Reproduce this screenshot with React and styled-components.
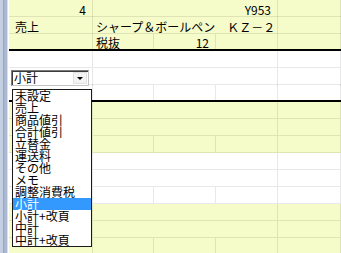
import React from "react";
import styled, { createGlobalStyle } from "styled-components";

const GlobalStyle = createGlobalStyle`
  html, body {
    margin: 0;
    padding: 0;
    background: #ffffff;
    overflow: hidden;
  }
  body {
    font-family: "Noto Sans CJK JP", "Liberation Sans", sans-serif;
    font-size: 12px;
    color: #000000;
  }
`;

const Frame = styled.div`
  display: flex;
  width: 341px;
  height: 253px;
  overflow: hidden;
`;

const WindowEdge = styled.div`
  flex: 0 0 9px;
  background: linear-gradient(
    to right,
    #c4d0e2 0 3px,
    #95a6c2 3px 4px,
    #a9b8d0 4px 7px,
    #dbe1ea 7px 8px,
    #ffffff 8px 9px
  );
`;

const Sheet = styled.div`
  flex: 1;
  min-width: 0;
`;

const Band = styled.div`
  background: ${(props) => (props.$tint ? "#f6fbca" : "#ffffff")};
`;

const Row = styled.div`
  display: grid;
  grid-template-columns: ${(props) =>
    props.$split ? "84px 61px 62px 62px 63px" : "84px 185px 63px"};
  height: 17px;
  box-sizing: border-box;
  border-bottom: ${(props) =>
    props.$thick ? "2px solid #000000" : "1px solid rgba(0, 0, 0, 0.09)"};
`;

const Cell = styled.div`
  box-sizing: border-box;
  height: 100%;
  border-right: 1px solid rgba(0, 0, 0, 0.09);
  padding-left: ${(props) => (props.$first ? "6px" : "3px")};
  padding-right: ${(props) => (props.$right ? "6px" : "0")};
  padding-top: ${(props) => (props.$thick ? "2px" : "3px")};
  text-align: ${(props) => (props.$right ? "right" : "left")};
  line-height: 14px;
  white-space: nowrap;
`;

const ComboCell = styled.div`
  box-sizing: border-box;
  border-right: 1px solid rgba(0, 0, 0, 0.09);
  padding: 2px 0 0 2px;
  position: relative;
  z-index: 2;
`;

const Combo = styled.div`
  position: relative;
  display: flex;
  align-items: center;
  width: 78px;
  height: 16px;
  box-sizing: border-box;
  background: #ffffff;
  border: 1px solid;
  border-color: #7c7c7c #c4c4c4 #c4c4c4 #7c7c7c;
  box-shadow: inset 1px 1px 0 #3c3c3c;
`;

const ComboText = styled.span`
  flex: 1;
  padding-left: 2px;
  line-height: 14px;
`;

const ArrowButton = styled.span`
  display: flex;
  align-items: center;
  justify-content: center;
  width: 14px;
  height: 12px;
  margin-right: 1px;
  background: #f3f3f3;
  border: 1px solid #e2e2e2;
  box-sizing: border-box;

  &::after {
    content: "";
    border-left: 3px solid transparent;
    border-right: 3px solid transparent;
    border-top: 3px solid #000000;
  }
`;

const ListBox = styled.ul`
  position: absolute;
  top: 18px;
  left: 0;
  width: 80px;
  margin: 0;
  padding: 0;
  list-style: none;
  box-sizing: border-box;
  background: #ffffff;
  border: 1px solid #1a1a1a;
`;

const Option = styled.li`
  height: 12px;
  line-height: 12px;
  padding-left: 2px;
  white-space: nowrap;
  background: ${(props) => (props.$selected ? "#3399ff" : "transparent")};
  color: ${(props) => (props.$selected ? "#ffffff" : "#000000")};
`;

const options = [
  "未設定",
  "売上",
  "商品値引",
  "合計値引",
  "立替金",
  "運送料",
  "その他",
  "メモ",
  "調整消費税",
  "小計",
  "小計+改頁",
  "中計",
  "中計+改頁",
];

function SplitRow({ name = "", qty = "" }) {
  return (
    <Row $split $thick>
      <Cell $first $thick />
      <Cell $thick>{name}</Cell>
      <Cell $thick $right>
        {qty}
      </Cell>
      <Cell $thick />
      <Cell $thick />
    </Row>
  );
}

function EmptyRow() {
  return (
    <Row>
      <Cell $first />
      <Cell />
      <Cell />
    </Row>
  );
}

function EmptyBand({ tint }) {
  return (
    <Band $tint={tint}>
      <EmptyRow />
      <EmptyRow />
      <Row $split>
        <Cell $first />
        <Cell />
        <Cell />
        <Cell />
        <Cell />
      </Row>
    </Band>
  );
}

export default function App() {
  return (
    <>
      <GlobalStyle />
      <Frame>
        <WindowEdge />
        <Sheet>
          <Band $tint>
            <Row>
              <Cell $first $right>
                4
              </Cell>
              <Cell $right>Y953</Cell>
              <Cell />
            </Row>
            <Row>
              <Cell $first>売上</Cell>
              <Cell>シャープ＆ボールペン　ＫＺ－２</Cell>
              <Cell />
            </Row>
            <SplitRow name="税抜" qty="12" />
          </Band>

          <Band>
            <EmptyRow />
            <Row>
              <ComboCell>
                <Combo>
                  <ComboText>小計</ComboText>
                  <ArrowButton />
                  <ListBox>
                    {options.map((label) => (
                      <Option key={label} $selected={label === "小計"}>
                        {label}
                      </Option>
                    ))}
                  </ListBox>
                </Combo>
              </ComboCell>
              <Cell />
              <Cell />
            </Row>
            <SplitRow />
          </Band>

          <EmptyBand tint />
          <EmptyBand />
          <EmptyBand tint />
        </Sheet>
      </Frame>
    </>
  );
}
